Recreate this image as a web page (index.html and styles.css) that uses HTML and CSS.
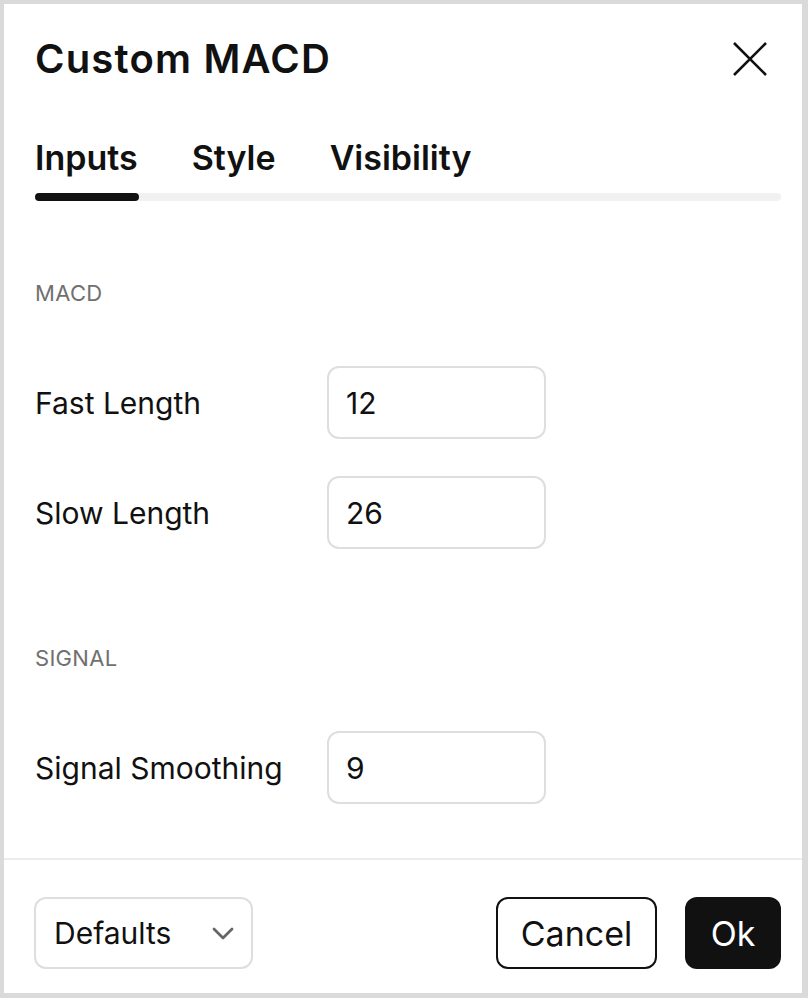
FILE: index.html
```html
<!DOCTYPE html>
<html lang="en">
<head>
<meta charset="utf-8">
<title>Custom MACD</title>
<link rel="stylesheet" href="styles.css">
</head>
<body>
<div class="dialog">
  <header class="dialog-header">
    <h1 class="dialog-title">Custom MACD</h1>
    <button class="close-btn" aria-label="Close">
      <svg width="34" height="34" viewBox="0 0 34 34" aria-hidden="true">
        <path d="M1 1 L33 33 M33 1 L1 33" stroke="#111" stroke-width="2.6" stroke-linecap="butt" fill="none"/>
      </svg>
    </button>
  </header>

  <nav class="tabs">
    <div class="tab-list">
      <span class="tab">Inputs</span>
      <span class="tab">Style</span>
      <span class="tab">Visibility</span>
    </div>
    <div class="tab-track"><div class="tab-indicator"></div></div>
  </nav>

  <section class="section section-macd">
    <div class="section-label">MACD</div>
    <div class="rows">
      <label class="row">
        <span class="row-label">Fast Length</span>
        <span class="field">12</span>
      </label>
      <label class="row">
        <span class="row-label">Slow Length</span>
        <span class="field">26</span>
      </label>
    </div>
  </section>

  <section class="section section-signal">
    <div class="section-label">SIGNAL</div>
    <div class="rows">
      <label class="row">
        <span class="row-label">Signal Smoothing</span>
        <span class="field">9</span>
      </label>
    </div>
  </section>

  <footer class="dialog-footer">
    <div class="select">
      <span>Defaults</span>
      <svg width="22" height="13" viewBox="0 0 22 13" aria-hidden="true">
        <path d="M2 2 L11 11 L20 2" stroke="#666" stroke-width="2.8" fill="none" stroke-linecap="round" stroke-linejoin="round"/>
      </svg>
    </div>
    <div class="actions">
      <button class="btn btn-outline">Cancel</button>
      <button class="btn btn-solid">Ok</button>
    </div>
  </footer>
</div>
</body>
</html>
```

FILE: styles.css
```css
html {
  background: #dadada;
}

body {
  margin: 0;
  padding: 4px 6px 5px 4px;
  font-family: Inter, "Noto Sans", "Liberation Sans", sans-serif;
  color: #111;
}

.dialog {
  background: #fff;
  height: 989px;
  display: flex;
  flex-direction: column;
  box-sizing: border-box;
  padding-top: 31px;
}

.dialog-header {
  display: flex;
  align-items: center;
  justify-content: space-between;
  height: 48px;
  padding: 0 35px 0 31px;
}

.dialog-title {
  margin: 0;
  font-size: 40px;
  line-height: 48px;
  font-weight: 600;
  letter-spacing: 1.2px;
}

.close-btn {
  border: 0;
  background: none;
  padding: 0;
  width: 34px;
  height: 34px;
  display: block;
}

.close-btn svg {
  display: block;
}

.tabs {
  margin-top: 55px;
  padding: 0 21px 0 31px;
}

.tab-list {
  display: flex;
  gap: 54px;
}

.tab {
  font-size: 34px;
  line-height: 40px;
  font-weight: 600;
}

.tab-track {
  margin-top: 15px;
  height: 8px;
  border-radius: 4px;
  background: #f1f1f1;
}

.tab-indicator {
  width: 104px;
  height: 8px;
  border-radius: 4px;
  background: #111;
}

.section {
  padding: 0 31px;
}

.section-macd {
  margin-top: 79px;
}

.section-signal {
  margin-top: 96px;
}

.section-label {
  font-size: 22px;
  line-height: 26px;
  color: #707070;
  letter-spacing: 0.3px;
}

.rows {
  margin-top: 60px;
  display: flex;
  flex-direction: column;
  gap: 37px;
}

.row {
  display: grid;
  grid-template-columns: 292px 219px;
  align-items: center;
}

.row-label {
  font-size: 30px;
  line-height: 36px;
  padding-top: 1px;
}

.field {
  box-sizing: border-box;
  height: 73px;
  border: 2px solid #dedede;
  border-radius: 12px;
  padding: 1px 17px 0;
  font-size: 30px;
  display: flex;
  align-items: center;
}

.dialog-footer {
  margin-top: auto;
  border-top: 2px solid #ececec;
  padding: 37px 21px 24px 30px;
  display: flex;
  align-items: center;
  justify-content: space-between;
}

.select {
  box-sizing: border-box;
  width: 219px;
  height: 72px;
  border: 2px solid #dedede;
  border-radius: 12px;
  padding: 0 17px 0 18px;
  display: flex;
  align-items: center;
  justify-content: space-between;
  font-size: 30px;
}

.select svg {
  display: block;
}

.actions {
  display: flex;
  gap: 28px;
}

.btn {
  box-sizing: border-box;
  height: 72px;
  border-radius: 12px;
  font-family: inherit;
  font-size: 34px;
  padding: 0;
  display: flex;
  align-items: center;
  justify-content: center;
}

.btn-outline {
  width: 161px;
  background: #fff;
  color: #111;
  border: 2px solid #111;
}

.btn-solid {
  width: 96px;
  background: #111;
  color: #fff;
  border: 0;
}
```
